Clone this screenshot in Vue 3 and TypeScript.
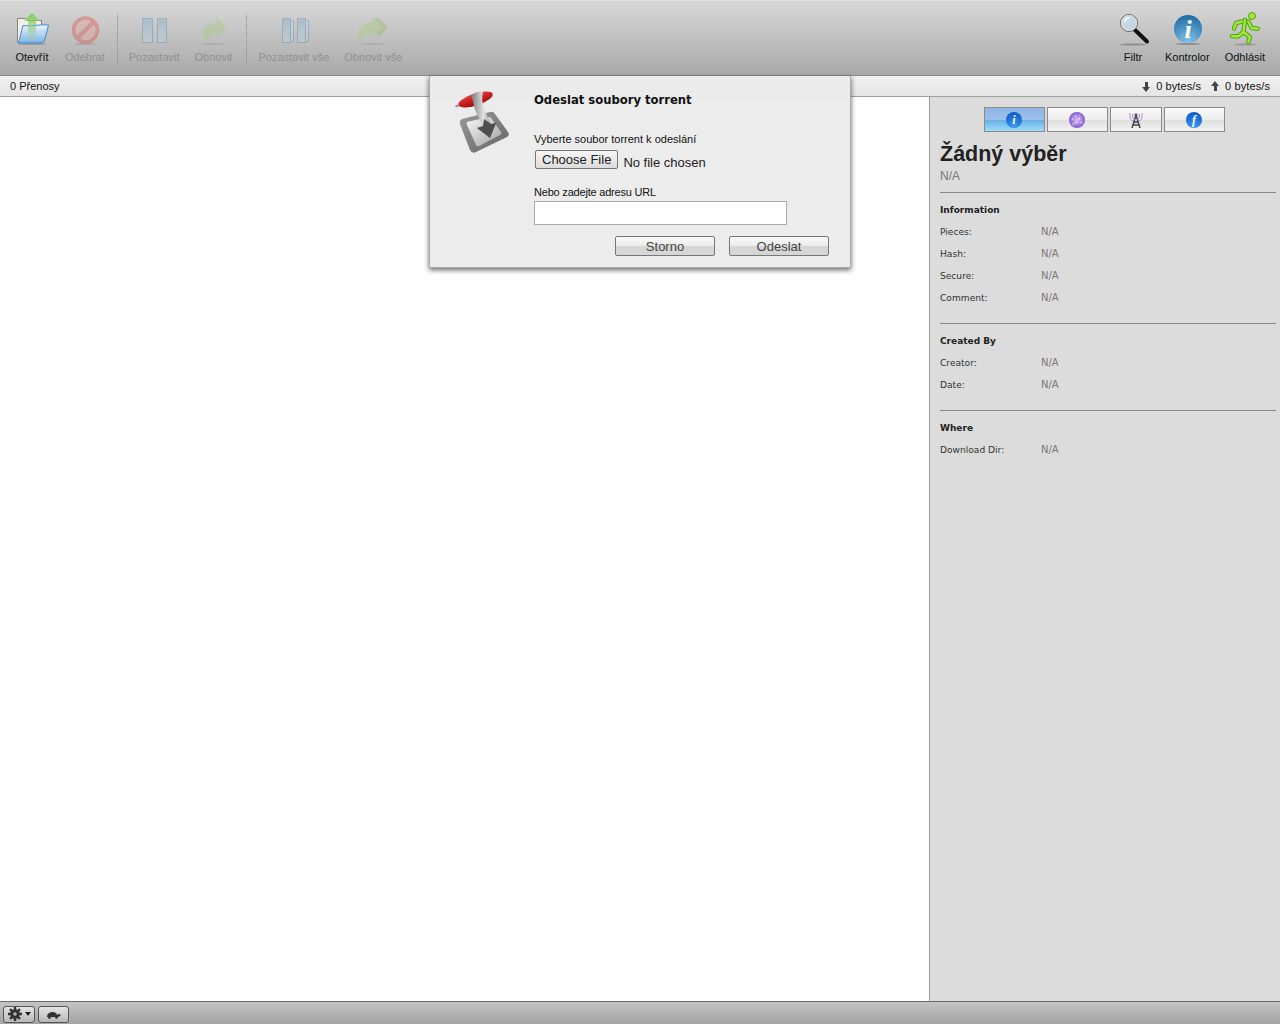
<script setup lang="ts">
interface Section {
  title: string
  rows: string[]
}

const sections: Section[] = [
  { title: 'Information', rows: ['Pieces:', 'Hash:', 'Secure:', 'Comment:'] },
  { title: 'Created By', rows: ['Creator:', 'Date:'] },
  { title: 'Where', rows: ['Download Dir:'] }
]
</script>

<template>
  <div class="page">
    <header class="toolbar">
      <button class="tool">
        <svg class="ico" viewBox="0 0 36 36">
          <defs>
            <linearGradient id="fold" x1="0" y1="0" x2="0" y2="1"><stop offset="0" stop-color="#eaf4fc" /><stop offset="1" stop-color="#7db5e4" /></linearGradient>
            <linearGradient id="arrow" x1="0" y1="0" x2="0" y2="1"><stop offset="0" stop-color="#7ed24e" /><stop offset="1" stop-color="#9cc8a4" stop-opacity=".3" /></linearGradient>
          </defs>
          <ellipse cx="18" cy="33" rx="14" ry="1" fill="#000" opacity=".2" />
          <path d="M3.500 7.500h8l2 2h14v22h-24z" fill="#f3efe2" stroke="#85827a" />
          <path d="M4.500 32 9 14.500q7 1 12 0t13.500-.5L31 28q-1 4-4 4z" fill="url(#fold)" stroke="#3f8fd0" />
          <path d="M18 2l8 8h-4v18h-8V10h-4z" fill="url(#arrow)" />
        </svg>
        <span>Otevřít</span>
      </button>
      <button class="tool off">
        <svg class="ico" viewBox="0 0 36 36">
          <ellipse cx="18.500" cy="33" rx="12" ry="1" fill="#000" opacity=".25" />
          <circle cx="18.500" cy="19" r="12" fill="#e89c96" stroke="#d85048" stroke-width="3.500" />
          <path d="M10 27.500l17-17" stroke="#d85048" stroke-width="4" />
        </svg>
        <span>Odebrat</span>
      </button>
      <i class="sep s1"></i>
      <button class="tool off">
        <svg class="ico" viewBox="0 0 36 36">
          <defs>
            <linearGradient id="bar" x1="0" y1="0" x2="0" y2="1"><stop offset="0" stop-color="#7aa8c8" /><stop offset="1" stop-color="#c0dcec" /></linearGradient>
          </defs>
          <rect x="6.500" y="7.500" width="10" height="24" fill="url(#bar)" stroke="#5a88a8" />
          <rect x="21.500" y="7.500" width="9" height="24" fill="url(#bar)" stroke="#5a88a8" />
        </svg>
        <span>Pozastavit</span>
      </button>
      <button class="tool off">
        <svg class="ico" viewBox="0 0 36 36">
          <ellipse cx="18" cy="33" rx="12" ry="1" fill="#000" opacity=".2" />
          <path d="M21.500 6 31.500 17 21 27v-5q-7 0-8 9-7-5-4.500-12 2.500-7 13-7.500z" fill="#a8cc7a" />
        </svg>
        <span>Obnovit</span>
      </button>
      <i class="sep s2"></i>
      <button class="tool off">
        <svg class="ico" viewBox="0 0 36 36">
          <rect x="14" y="9.500" width="3.500" height="21" fill="#c0dcec" stroke="#5a88a8" />
          <rect x="6.500" y="7.500" width="8" height="24" fill="url(#bar)" stroke="#5a88a8" />
          <rect x="29" y="9.500" width="3.500" height="21" fill="#c0dcec" stroke="#5a88a8" />
          <rect x="21.500" y="7.500" width="8" height="24" fill="url(#bar)" stroke="#5a88a8" />
        </svg>
        <span>Pozastavit vše</span>
      </button>
      <button class="tool off">
        <svg class="ico" viewBox="0 0 36 36">
          <ellipse cx="18" cy="33" rx="13" ry="1" fill="#000" opacity=".2" />
          <path d="M23 6l10 10.500L23 27v-4l-6-2V10z" fill="#94bc64" />
          <path d="M17 6l10 10.500L16 27v-5q-7 0-8 9-7-5-4.500-12Q6 12 17 11.500z" fill="#a8cc7a" />
        </svg>
        <span>Obnovit vše</span>
      </button>
      <div class="grow"></div>
      <button class="tool nudge">
        <svg class="ico" viewBox="0 0 36 36">
          <ellipse cx="18" cy="33.500" rx="13" ry="1" fill="#000" opacity=".25" />
          <path d="M20 19l12 11.500" stroke="#111" stroke-width="4" stroke-linecap="round" />
          <circle cx="14" cy="12" r="8.500" fill="#c4d8e4" stroke="#555" stroke-width="1" />
          <circle cx="14" cy="12" r="7.500" fill="none" stroke="#d8d8d8" stroke-width="1.500" />
          <path d="M9.500 11q1-4 5-4.500" fill="none" stroke="#fff" stroke-width="1.500" />
        </svg>
        <span>Filtr</span>
      </button>
      <button class="tool">
        <svg class="ico" viewBox="0 0 36 36">
          <defs>
            <radialGradient id="inf" cx=".5" cy=".95" r=".95"><stop offset="0" stop-color="#86c4ea" /><stop offset="1" stop-color="#1d6ca6" /></radialGradient>
          </defs>
          <ellipse cx="19" cy="33" rx="13" ry="1" fill="#000" opacity=".25" />
          <circle cx="19" cy="18" r="14" fill="url(#inf)" />
          <text x="19" y="27" text-anchor="middle" class="info-i">i</text>
        </svg>
        <span>Kontrolor</span>
      </button>
      <button class="tool">
        <svg class="ico" viewBox="0 0 36 36">
          <ellipse cx="18" cy="33.500" rx="11" ry="1" fill="#000" opacity=".2" />
          <circle cx="25" cy="5" r="3.500" fill="#9fe63c" stroke="#4fa80e" />
          <g fill="none" stroke="#4fa80e" stroke-width="4.500" stroke-linejoin="round" stroke-linecap="round">
            <path d="M15 10.500 9 12l-2 5.500M18 9l-1.700 13M21.300 10.500 24.700 17l6 .7M16.300 21l-5 4.300H5M18 22l5 4.300L21.300 31" />
          </g>
          <g fill="none" stroke="#a0e63c" stroke-width="2.400" stroke-linejoin="round" stroke-linecap="round">
            <path d="M15 10.500 9 12l-2 5.500M18 9l-1.700 13M21.300 10.500 24.700 17l6 .7M16.300 21l-5 4.300H5M18 22l5 4.300L21.300 31" />
          </g>
        </svg>
        <span>Odhlásit</span>
      </button>
    </header>

    <div class="status">
      <span>0 Přenosy</span>
      <div class="rates">
        <span class="rate"><i class="arr down"></i>0 bytes/s</span>
        <span class="rate"><i class="arr up"></i>0 bytes/s</span>
      </div>
    </div>

    <div class="main">
      <div class="list"></div>
      <aside class="inspector">
        <div class="tabs">
          <button class="tab on w60">
            <svg viewBox="0 0 16 16"><circle cx="8" cy="8" r="8" fill="url(#tabblue)" /><text x="8" y="12" text-anchor="middle" class="tab-i">i</text></svg>
          </button>
          <button class="tab w60">
            <svg viewBox="0 0 17 17">
              <defs>
                <radialGradient id="tabblue" cx=".5" cy=".9" r=".9"><stop offset="0" stop-color="#3a9cf0" /><stop offset="1" stop-color="#0f58c8" /></radialGradient>
                <radialGradient id="globe" cx=".5" cy=".5" r=".6"><stop offset="0" stop-color="#d4bcf4" /><stop offset="1" stop-color="#7448cc" /></radialGradient>
              </defs>
              <circle cx="8.500" cy="8.500" r="8.500" fill="url(#globe)" />
              <path d="M3 7h2v1H3zM6 4h2v1H6zM10 6h2v2h-2zM6 11h3v1H6zM12 11h2v1h-2zM4 12h1v2H4zM8 8h1v1H8zM11 3h1v1h-1z" fill="#efe6fc" />
            </svg>
          </button>
          <button class="tab w51">
            <svg viewBox="0 0 16 16">
              <path d="M8 3 4 16M8 3l4 13M6 10h4M5 13h6" stroke="#444" stroke-width="1.500" fill="none" />
              <circle cx="8" cy="3" r="1.700" fill="#666" />
              <path d="M4.500 2Q4 6 6.500 7.500M11.500 2Q12 6 9.500 7.500M2 1Q1 7 5 9.500M14 1Q15 7 11 9.500" stroke="#b088e8" fill="none" />
            </svg>
          </button>
          <button class="tab w60">
            <svg viewBox="0 0 16 16"><circle cx="8" cy="8" r="8" fill="url(#tabblue)" /><text x="8" y="12" text-anchor="middle" class="tab-i">f</text></svg>
          </button>
        </div>
        <h1>Žádný výběr</h1>
        <p class="sub">N/A</p>
        <section v-for="s in sections" :key="s.title" class="sect">
          <h2>{{ s.title }}</h2>
          <div v-for="r in s.rows" :key="r" class="row">
            <label>{{ r }}</label><span>N/A</span>
          </div>
        </section>
      </aside>
    </div>

    <footer class="footer">
      <button class="fbtn gear">
        <svg viewBox="0 0 16 16" width="14" height="14">
          <g stroke="#333" stroke-width="2.800"><path d="M8 0v16M0 8h16M2.300 2.300l11.400 11.400M13.700 2.300 2.300 13.700" /></g>
          <circle cx="8" cy="8" r="5.500" fill="#333" /><circle cx="8" cy="8" r="2" fill="#bbb" />
        </svg>
        <i class="caret"></i>
      </button>
      <button class="fbtn turtle">
        <svg viewBox="0 0 18 10" width="15" height="9"><path d="M1 8q1-6 7-6 4 0 5.500 3.500L15 4.500q3 0 2.500 2l-3 1.500-1 2h-2l-.5-2H6l-1 2H3l-.5-2z" fill="#333" /></svg>
      </button>
    </footer>

    <div class="dialog">
      <svg class="logo" viewBox="0 0 64 72">
        <defs>
          <linearGradient id="plate" x1="0" y1="0" x2="1" y2="1"><stop offset="0" stop-color="#f8f8f8" /><stop offset="1" stop-color="#a0a0a0" /></linearGradient>
          <linearGradient id="rim" x1="0" y1="0" x2="1" y2="1"><stop offset="0" stop-color="#999" /><stop offset="1" stop-color="#666" /></linearGradient>
          <linearGradient id="red" x1="0" y1="0" x2="0" y2="1"><stop offset="0" stop-color="#ee3a3a" /><stop offset="1" stop-color="#a00808" /></linearGradient>
          <linearGradient id="lever" x1="0" y1="0" x2="1" y2="0"><stop offset="0" stop-color="#777" /><stop offset=".5" stop-color="#e2e2e2" /><stop offset="1" stop-color="#666" /></linearGradient>
        </defs>
        <path d="M8 31Q5 33 6 36L16 62Q18 66 22 64L53 49Q56 47 54 44L41 26Q39 23 36 24Z" fill="url(#rim)" />
        <path d="M13 34 34 29Q36 29 37 30L47 44Q48 46 46 47L25 58Q23 59 22 57L13 37Q12 35 13 34Z" fill="url(#plate)" />
        <ellipse cx="3" cy="18" rx="1.800" ry="1.200" fill="#999" />
        <ellipse cx="21.500" cy="11.500" rx="18" ry="6" fill="url(#red)" transform="rotate(-18 21.500 11.500)" />
        <path d="M17 7Q23 3 29 4 27 12 30 20 33 28 37 36L42 35 36 50 23 40 29 38Q22 26 20 18 19 12 17 7Z" fill="url(#lever)" />
        <path d="M30 31 37 36 42 35 36 50 23 40 29 38Z" fill="#4e4e4e" />
      </svg>
      <form class="dlg-body" @submit.prevent>
        <h3>Odeslat soubory torrent</h3>
        <label class="fld">Vyberte soubor torrent k odeslání</label>
        <input class="file" type="file" />
        <label class="fld url">Nebo zadejte adresu URL</label>
        <input class="url-in" type="text" />
        <div class="actions">
          <button type="button" class="dbtn">Storno</button>
          <button type="button" class="dbtn">Odeslat</button>
        </div>
      </form>
    </div>
  </div>
</template>

<style>
html, body { margin: 0; height: 100%; overflow: hidden; }
</style>

<style scoped>
.page {
  position: relative;
  display: flex;
  flex-direction: column;
  height: 1024px;
  font-family: "Liberation Sans", Arial, sans-serif;
  font-size: 11px;
  color: #111;
  background: #fff;
}

.toolbar {
  display: flex;
  align-items: stretch;
  gap: 15px;
  box-sizing: border-box;
  height: 76px;
  padding: 0 15px 0 14px;
  background: linear-gradient(#d8d8d8, #a9a9a9);
  border-top: 1px solid #e2e2e2;
  border-bottom: 1px solid #8a8a8a;
}

.tool {
  display: flex;
  flex-direction: column;
  align-items: center;
  padding: 0;
  border: 0;
  background: none;
  font: inherit;
  color: #111;
}
.tool span { margin-top: 3px; line-height: 14px; white-space: nowrap; }
.tool.off span { color: #909090; }
.tool.off .ico { opacity: .4; }
.tool.nudge { margin-right: -1px; }
.ico { display: block; width: 36px; height: 36px; margin-top: 10px; }
.info-i { font: italic bold 26px "Liberation Serif", serif; fill: #fff; }
.tab-i { font: italic bold 12px "Liberation Serif", serif; fill: #fff; }

.sep {
  width: 0;
  margin: 13px -3px 12px -3px;
  border-left: 1px dotted #888;
}
.sep.s1 { margin-right: -4px; }
.sep.s2 { margin-left: -1px; margin-right: -4px; }
.grow { flex: 1; }

.status {
  display: flex;
  justify-content: space-between;
  align-items: center;
  box-sizing: border-box;
  height: 21px;
  padding: 0 10px;
  background: linear-gradient(#f2f2f2, #e4e4e4);
  border-bottom: 1px solid #a0a0a0;
}
.rates { display: flex; gap: 10px; }
.rate { display: flex; align-items: center; gap: 5px; letter-spacing: .1px; }
.arr { position: relative; width: 9px; height: 9px; }
.arr::before {
  content: "";
  position: absolute;
  left: 3px;
  width: 3px;
  height: 5px;
  background: #444;
}
.arr::after {
  content: "";
  position: absolute;
  left: 0;
  border-left: 4.5px solid transparent;
  border-right: 4.5px solid transparent;
}
.arr.down::before { top: 0; }
.arr.down::after { top: 5px; border-top: 5px solid #444; }
.arr.up::before { bottom: 0; }
.arr.up::after { bottom: 5px; border-bottom: 5px solid #444; }

.main { flex: 1; display: flex; min-height: 0; }
.list { flex: 1; background: #fff; }

.inspector {
  box-sizing: border-box;
  width: 351px;
  padding: 10px 4px 0 10px;
  background: #dcdcdc;
  border-left: 1px solid #9a9a9a;
}
.tabs { display: flex; justify-content: center; gap: 2px; padding-right: 8px; }
.tab {
  display: flex;
  align-items: center;
  justify-content: center;
  box-sizing: border-box;
  height: 25px;
  padding: 0;
  border: 1px solid #8a8a8a;
  background: linear-gradient(#fbfbfb 0, #ececec 50%, #dddddd 50%, #f2f2f2 100%);
}
.tab svg { width: 16px; height: 16px; }
.tab.on { background: linear-gradient(#8fb4e6 0, #9cc0ea 50%, #62ace4 50%, #a0dcf8 100%); }
.w60 { width: 61px; }
.w51 { width: 52px; }

h1 {
  margin: 10px 0 0;
  font: bold 21.5px/25px "Liberation Sans", Arial, sans-serif;
  color: #222;
}
.sub { margin: 2px 0 0; font-size: 12px; line-height: 14px; color: #777; }

.sect {
  padding: 11px 0 14px;
  border-top: 1px solid #888;
  margin-top: 9px;
  font-family: "DejaVu Sans", sans-serif;
  font-size: 9.1px;
}
.sect + .sect { margin-top: 0; }
.sect h2 {
  margin: 0;
  font-size: 9px;
  line-height: 12px;
  font-weight: bold;
  color: #222;
}
.row { display: flex; height: 22px; line-height: 22px; }
.row:first-of-type { margin-top: 5px; }
.row label { width: 101px; color: #333; }
.row span { font-size: 10px; color: #777; }

.footer {
  display: flex;
  align-items: center;
  gap: 3px;
  box-sizing: border-box;
  height: 23px;
  padding: 2px 0 0 3px;
  background: linear-gradient(#c4c4c4, #a4a4a4);
  border-top: 1px solid #6a6a6a;
}
.fbtn {
  display: flex;
  align-items: center;
  justify-content: center;
  box-sizing: border-box;
  height: 17px;
  padding: 0;
  border: 1px solid #555;
  border-radius: 3px;
  background: linear-gradient(#e4e4e4, #b8b8b8);
}
.gear { width: 32px; gap: 3px; }
.turtle { width: 31px; }
.caret {
  border-left: 3.5px solid transparent;
  border-right: 3.5px solid transparent;
  border-top: 4px solid #222;
}

.dialog {
  position: absolute;
  left: 429px;
  top: 76px;
  display: flex;
  box-sizing: border-box;
  width: 422px;
  height: 192px;
  background: rgba(235, 235, 235, .95);
  border: 1px solid #aaa;
  border-top: 0;
  box-shadow: 0 2px 5px rgba(0, 0, 0, .6);
}
.logo { position: absolute; left: 24px; top: 12px; width: 64px; height: 72px; }
.dlg-body {
  display: flex;
  flex-direction: column;
  align-items: flex-start;
  width: 100%;
  padding: 16px 21px 0 104px;
}
h3 {
  margin: 0;
  font: bold 11.6px/16px "DejaVu Sans", sans-serif;
  color: #111;
}
.fld { margin-top: 24px; line-height: 14px; font-size: 11px; color: #111; }
.fld.url { margin-top: 15px; letter-spacing: -.2px; }
.file {
  margin-top: 4px;
  font: 13px "Liberation Sans", Arial, sans-serif;
  color: #222;
}
.file::file-selector-button {
  height: 19px;
  padding: 0 6px;
  margin: 0 5px 0 1px;
  vertical-align: 3px;
  font: inherit;
  color: #222;
  border: 1px solid #777;
  border-radius: 2px;
  background: linear-gradient(#f6f6f6, #dcdcdc);
}
.url-in {
  box-sizing: border-box;
  width: 253px;
  height: 24px;
  margin-top: 2px;
  border: 1px solid #aaa;
  background: #fff;
}
.actions { display: flex; justify-content: flex-end; gap: 14px; width: 100%; margin-top: 11px; }
.dbtn {
  box-sizing: border-box;
  width: 100px;
  height: 20px;
  padding: 0;
  font: 13px "Liberation Sans", Arial, sans-serif;
  color: #444;
  border: 1px solid #777;
  border-radius: 2px;
  background: linear-gradient(#f8f8f8 0, #ececec 50%, #d6d6d6 50%, #d6d6d6 100%);
}
</style>
